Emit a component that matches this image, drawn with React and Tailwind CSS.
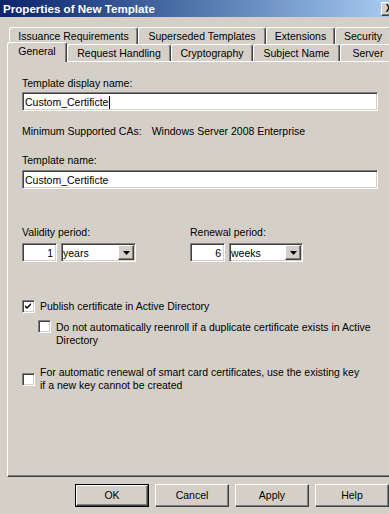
import React from "react";

const sunken =
  "border border-t-[#808080] border-l-[#808080] border-b-white border-r-white shadow-[inset_1px_1px_0_#404040,inset_-1px_-1px_0_#d4d0c8] bg-white";
const raised =
  "border border-t-white border-l-white border-b-[#404040] border-r-[#404040] shadow-[inset_-1px_-1px_0_#808080] bg-[#d4d0c8]";
const tab =
  "flex items-center justify-center border-t border-l border-r border-t-white border-l-white border-r-[#404040] shadow-[inset_-1px_0_0_#808080] rounded-t-[3px] bg-[#d4d0c8]";

const Tab = ({ label, className }) => <div className={`${tab} ${className}`}>{label}</div>;

const Checkbox = ({ checked }) => (
  <div className={`${sunken} w-[13px] h-[13px] shrink-0 flex items-center justify-center`}>
    {checked && (
      <svg width="7" height="7" viewBox="0 0 7 7">
        <path d="M0 2 L2 4 L6 0 L6 2 L2 6 L0 4 Z" fill="#000" />
      </svg>
    )}
  </div>
);

const Combo = ({ value, className }) => (
  <div className={`${sunken} h-[19px] flex items-center ${className}`}>
    <span className="flex-1 pl-[1px] pt-[1px]">{value}</span>
    <div className={`${raised} w-[16px] h-[15px] mr-[1px] flex items-center justify-center`}>
      <svg width="7" height="4" viewBox="0 0 7 4">
        <path d="M0 0 H7 L3.5 4 Z" fill="#000" />
      </svg>
    </div>
  </div>
);

const Button = ({ label, isDefault }) =>
  isDefault ? (
    <div className="w-[75px] h-[23px] border border-black">
      <div className={`${raised} w-full h-full flex items-center justify-center`}>{label}</div>
    </div>
  ) : (
    <div className={`${raised} w-[75px] h-[23px] flex items-center justify-center`}>{label}</div>
  );

export default function App() {
  return (
    <div className="w-[389px] h-[514px] overflow-hidden bg-[#d4d0c8] text-black text-[10.5px] leading-[13px] font-['Liberation_Sans',Arial,sans-serif]">
      {/* Title bar */}
      <div className="h-[17px] bg-linear-to-r from-[#0a246a] to-[#a6caf0] flex items-center pl-[3px]">
        <span className="flex-1 text-white font-bold text-[11.6px]">Properties of New Template</span>
        <div className={`${raised} w-[16px] h-[14px] shrink-0 mr-[-8px] flex items-center justify-center font-bold text-[10px]`}>
          X
        </div>
      </div>

      {/* Tabs */}
      <div className="flex ml-[9px] mt-[10px] h-[17px]">
        <Tab label="Issuance Requirements" className="w-[129px] h-[17px] shrink-0" />
        <Tab label="Superseded Templates" className="w-[128px] h-[17px] shrink-0" />
        <Tab label="Extensions" className="w-[69px] h-[17px] shrink-0" />
        <Tab label="Security" className="w-[56px] h-[17px] shrink-0" />
      </div>
      <div className="flex items-start ml-[7px] h-[17px]">
        <Tab label="General" className="relative z-10 w-[60px] h-[20px] -mt-[2px] shrink-0 pb-[2px]" />
        <Tab label="Request Handling" className="w-[104px] h-[17px] shrink-0" />
        <Tab label="Cryptography" className="w-[82px] h-[17px] shrink-0" />
        <Tab label="Subject Name" className="w-[87px] h-[17px] shrink-0" />
        <Tab label="Server" className="w-[56px] h-[17px] shrink-0" />
      </div>

      {/* Panel */}
      <div className="ml-[7px] w-[400px] h-[416px] border-t border-l border-t-white border-l-white border-b border-b-[#404040] shadow-[inset_0_-1px_0_#808080] pl-[14px]">
        <div className="mt-[15px]">Template display name:</div>
        <div className={`${sunken} mt-[2px] w-[356px] h-[19px] flex items-center pl-[2px] pt-[1px]`}>
          Custom_Certificte
          <span className="inline-block w-px h-[13px] bg-black ml-px" />
        </div>

        <div className="mt-[14px] flex">
          <span>Minimum Supported CAs:</span>
          <span className="ml-[10px]">Windows Server 2008 Enterprise</span>
        </div>

        <div className="mt-[16px]">Template name:</div>
        <div className={`${sunken} mt-[3px] w-[356px] h-[19px] flex items-center pl-[2px] pt-[1px]`}>
          Custom_Certificte
        </div>

        <div className="mt-[37px] flex">
          <div className="w-[168px]">Validity period:</div>
          <div>Renewal period:</div>
        </div>
        <div className="mt-[4px] flex items-center">
          <div className={`${sunken} w-[35px] h-[19px] flex items-center justify-end pr-[3px] pt-[1px]`}>1</div>
          <Combo value="years" className="ml-[4px] w-[75px]" />
          <div className={`${sunken} ml-[54px] w-[35px] h-[19px] flex items-center justify-end pr-[3px] pt-[1px]`}>6</div>
          <Combo value="weeks" className="ml-[4px] w-[74px]" />
        </div>

        <div className="mt-[38px] flex items-center">
          <Checkbox checked />
          <span className="ml-[5px]">Publish certificate in Active Directory</span>
        </div>
        <div className="mt-[7px] ml-[16px] flex items-start">
          <Checkbox />
          <span className="ml-[5px] mt-px whitespace-nowrap">
            Do not automatically reenroll if a duplicate certificate exists in Active
            <br />
            Directory
          </span>
        </div>
        <div className="mt-[19px] flex items-center">
          <Checkbox />
          <span className="ml-[5px] whitespace-nowrap">
            For automatic renewal of smart card certificates, use the existing key
            <br />
            if a new key cannot be created
          </span>
        </div>
      </div>

      {/* Buttons */}
      <div className="mt-[7px] ml-[75px] flex gap-[6px]">
        <Button label="OK" isDefault />
        <Button label="Cancel" />
        <Button label="Apply" />
        <Button label="Help" />
      </div>
    </div>
  );
}
